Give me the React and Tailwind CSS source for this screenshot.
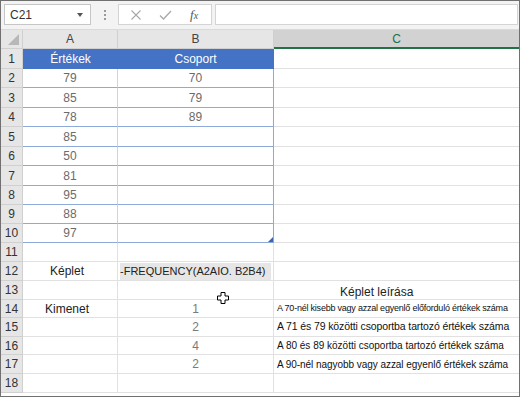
import React from 'react';

const rowHeights = [20, 19, 20, 19, 20, 19, 20, 19, 19, 19, 19, 19, 19, 18, 19, 18, 19, 19];

const values = ['79', '85', '78', '85', '50', '81', '95', '88', '97'];
const groups = ['70', '79', '89'];

const descriptions = [
  { text: 'A 70-nél kisebb vagy azzal egyenlő előforduló értékek száma', cls: 'text-[9px] tracking-[-0.22px]' },
  { text: 'A 71 és 79 közötti csoportba tartozó értékek száma', cls: 'text-[10.5px] tracking-[-0.12px]' },
  { text: 'A 80 és 89 közötti csoportba tartozó értékek száma', cls: 'text-[10px]' },
  { text: 'A 90-nél nagyobb vagy azzal egyenlő értékek száma', cls: 'text-[10px] tracking-[-0.05px]' },
];

const outputs = ['1', '2', '4', '2'];

const Cursor = () => (
  <svg width="12" height="12" viewBox="0 0 12 12" className="absolute left-[216px] top-[291px]">
    <path d="M4 0.5h4v3.5h3.5v4H8v3.5H4V8H0.5V4H4z" fill="white" stroke="black" strokeWidth="1" />
  </svg>
);

const Toolbar = () => (
  <div className="h-[29px] bg-[#f3f3f3] flex items-start pt-[3px] pl-[3px] pr-[1px] border-b border-[#dadada]">
    <div className="w-[87px] h-[21px] bg-white border border-[#c6c6c6] flex items-center justify-between pl-[5px] pr-[7px]">
      <span className="text-[12px] text-[#333]">C21</span>
      <span className="w-0 h-0 border-l-[3px] border-r-[3px] border-t-[4px] border-l-transparent border-r-transparent border-t-[#555]"></span>
    </div>
    <div className="w-[27px] h-[21px] flex flex-col items-center justify-center gap-[2px]">
      <span className="w-[2px] h-[2px] bg-[#9a9a9a]"></span>
      <span className="w-[2px] h-[2px] bg-[#9a9a9a]"></span>
      <span className="w-[2px] h-[2px] bg-[#9a9a9a]"></span>
    </div>
    <div className="w-[94px] h-[21px] bg-white border border-[#d4d4d4] flex items-center">
      <svg width="12" height="12" viewBox="0 0 12 12" className="ml-[11px]">
        <path d="M1.5 1.5l9 9M10.5 1.5l-9 9" stroke="#a8a8a8" strokeWidth="1.1" />
      </svg>
      <svg width="13" height="12" viewBox="0 0 13 12" className="ml-[17px]">
        <path d="M1 6.5l3.5 3.5L12 2" stroke="#a8a8a8" strokeWidth="1.3" fill="none" />
      </svg>
      <span className="ml-[18px] text-[13px] italic text-[#555] font-['Liberation_Serif',serif]">f<span className="text-[10px]">x</span></span>
    </div>
    <div className="flex-1 h-[21px] ml-[3px] bg-white border border-[#d4d4d4]"></div>
  </div>
);

const HeaderRow = () => (
  <div className="flex h-[19px] bg-[#e6e6e6] text-[12px] text-[#444]">
    <div className="w-[22px] border-r border-b border-[#d0d0d0] relative">
      <span className="absolute right-[3px] bottom-[3px] w-0 h-0 border-l-[11px] border-t-[11px] border-l-transparent border-t-transparent border-r-0 border-b-[11px] border-b-[#b8b8b8]" style={{ borderBottomWidth: 11 }}></span>
    </div>
    <div className="w-[95px] border-r border-b border-[#d0d0d0] flex items-center justify-center">A</div>
    <div className="w-[156px] border-r border-b border-[#d0d0d0] flex items-center justify-center">B</div>
    <div className="flex-1 bg-[#d2d2d2] border-b-2 border-[#217346] flex items-center justify-center text-[#217346]">C</div>
  </div>
);

const Row = ({ n, h, a, b, c }) => (
  <div className="flex" style={{ height: h }}>
    <div className="w-[22px] bg-[#e6e6e6] border-r border-b border-[#d0d0d0] flex items-center justify-center text-[12px] text-[#333]">{n}</div>
    {a}
    {b}
    <div className="flex-1 border-b border-[#e1e1e1] flex items-center overflow-hidden whitespace-nowrap">{c}</div>
  </div>
);

export default function App() {
  const rows = [];
  for (let i = 0; i < 18; i++) {
    const n = i + 1;
    const h = rowHeights[i];
    let a = null;
    let b = null;
    let c = null;

    if (n === 1) {
      a = <div className="w-[95px] bg-[#4472c4] text-white border-b border-[#4472c4] flex items-center justify-center text-[12px]">Értékek</div>;
      b = <div className="w-[156px] bg-[#4472c4] text-white border-b border-r border-[#4472c4] flex items-center justify-center text-[12px]">Csoport</div>;
    } else if (n <= 10) {
      a = <div className="w-[95px] border-b border-r border-b-[#8eaadb] border-r-[#d4d4d4] flex items-center justify-center text-[12px] text-[#6b6b6b]">{values[n - 2]}</div>;
      b = (
        <div className="w-[156px] border-b border-r border-[#8eaadb] flex items-center justify-center text-[12px] text-[#6b6b6b] relative">
          {groups[n - 2] || ''}
          {n === 10 && <span className="absolute right-[0px] bottom-[0px] w-0 h-0 border-l-[5px] border-t-[5px] border-l-transparent border-t-transparent border-b-[0px] border-r-[0px]" style={{ borderRight: '5px solid #3a63b8' }}></span>}
        </div>
      );
    } else {
      let aText = '';
      if (n === 12) aText = 'Képlet';
      if (n === 14) aText = 'Kimenet';
      a = <div className="w-[95px] border-b border-r border-[#e1e1e1] flex items-center justify-center pr-[6px] text-[12px] text-[#222]">{aText}</div>;
      if (n === 12) {
        b = (
          <div className="w-[156px] border-b border-r border-[#e1e1e1] flex items-center px-[2px]">
            <div className="w-full h-[17px] bg-[#e6e6e6] flex items-center text-[11px] text-[#222] whitespace-nowrap">-FREQUENCY(A2AIO. B2B4)</div>
          </div>
        );
      } else if (n >= 14 && n <= 17) {
        b = <div className="w-[156px] border-b border-r border-[#e1e1e1] flex items-center justify-center text-[12px] text-[#7a7a7a]">{outputs[n - 14]}</div>;
      } else {
        b = <div className="w-[156px] border-b border-r border-[#e1e1e1]"></div>;
      }
      if (n === 13) {
        c = <span className="ml-[66px] text-[12px] text-[#222] mt-[4px]">Képlet leírása</span>;
      } else if (n >= 14 && n <= 17) {
        const d = descriptions[n - 14];
        c = <span className={`ml-[3px] text-[#111] ${d.cls}`}>{d.text}</span>;
      }
    }

    rows.push(<Row key={n} n={n} h={h} a={a} b={b} c={c} />);
  }

  return (
    <div className="w-[520px] h-[397px] overflow-hidden bg-white border border-[#707070] flex flex-col font-['Liberation_Sans',Arial,sans-serif] relative">
      <Toolbar />
      <HeaderRow />
      <div className="flex flex-col">{rows}</div>
      <Cursor />
    </div>
  );
}
